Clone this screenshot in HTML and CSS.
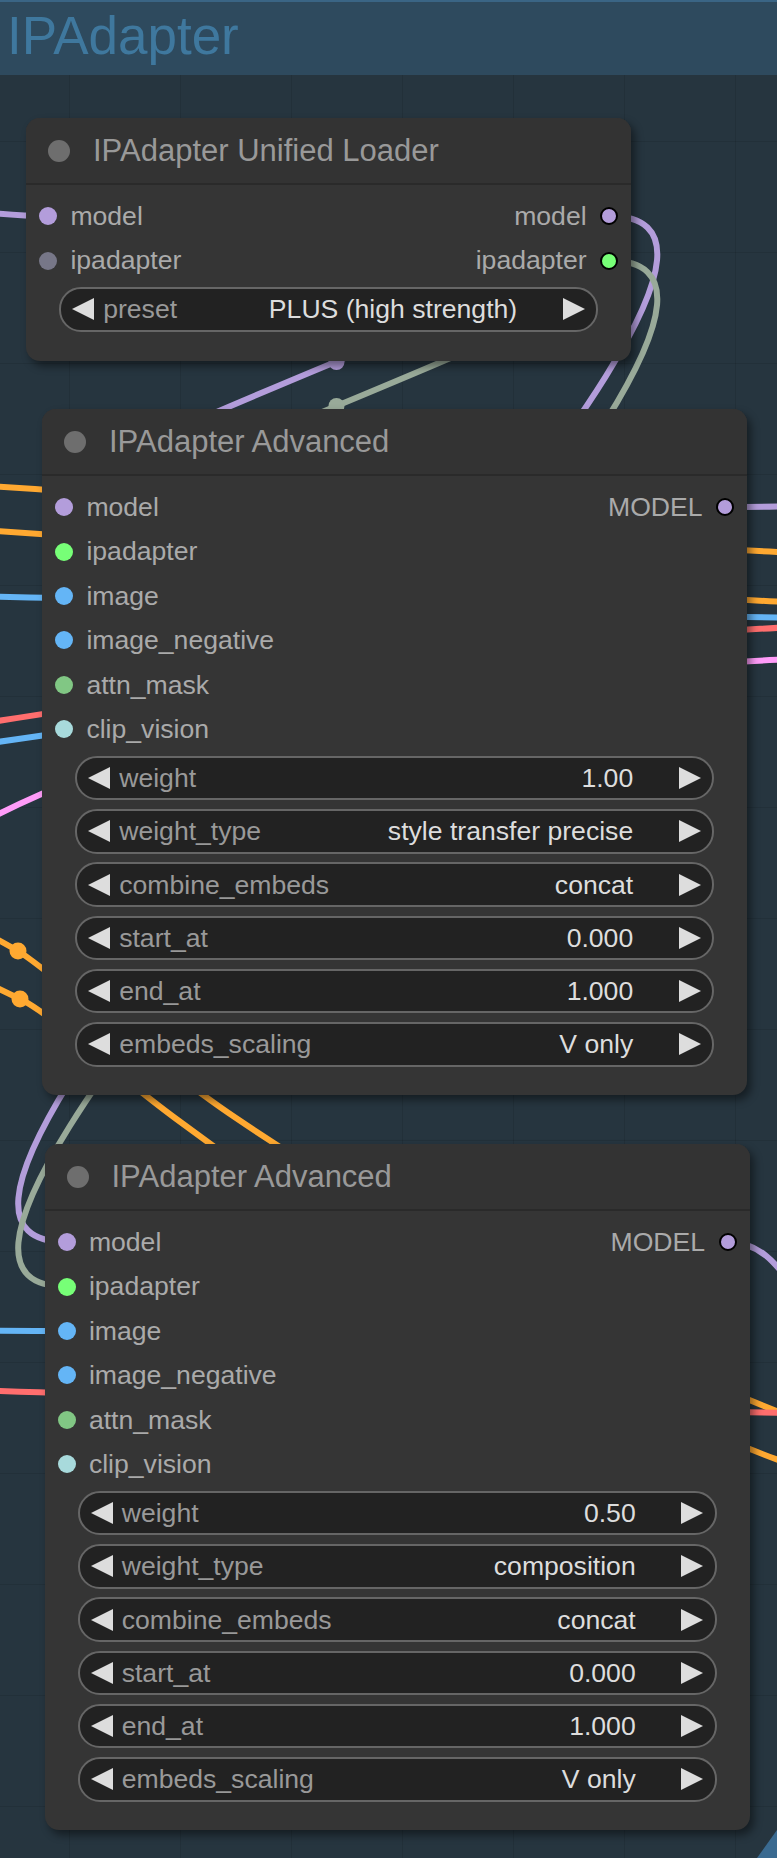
FILE: index.html
```html
<!DOCTYPE html>
<html lang="en">
<head>
<meta charset="utf-8">
<title>IPAdapter</title>
<link rel="stylesheet" href="styles.css">
</head>
<body>
<div class="canvas">
  <svg class="links" width="777" height="1858" viewBox="0 0 777 1858" xmlns="http://www.w3.org/2000/svg">
    <g fill="none" stroke-linecap="round">
      <!-- pass-through links -->
      <path class="wire" stroke="#ffa931" d="M-200,480 C200,482 500,557 1000,557"/>
      <path class="wire" stroke="#ffa931" d="M-200,524 C200,526 500,607 1000,607"/>
      <path class="wire" stroke="#ff6e6e" d="M-150,742 C100,712 500,622 1000,622"/>
      <path class="wire" stroke="#64b5f6" d="M-200,594 C200,596 500,619 1000,619"/>
      <path class="wire" stroke="#64b5f6" d="M-150,762 C60,736 250,700 400,690"/>
      <path class="wire" stroke="#ff9cf9" d="M-60,850 C20,790 300,655 1000,655"/>
      <path class="wire" stroke="#ffa931" d="M-80,897 C-30,925 -10,935 18,951 S150,1060 236,1118 S560,1330 800,1420"/>
      <path class="wire" stroke="#ffa931" d="M-80,945 C-30,975 -10,985 20,999 S100,1062 175,1118 S520,1368 800,1468"/>
      <path class="wire" stroke="#64b5f6" d="M-200,1329 C-100,1329 -50,1331 67,1331"/>
      <path class="wire" stroke="#ff6e6e" d="M-200,1385 C200,1395 500,1414 1000,1414"/>
      <path class="wire" stroke="#b39ddb" d="M-400,150 C-250,150 -100,216 48,216"/>
      <path class="wire" stroke="#b39ddb" d="M725,507 C850,507 900,500 1000,495"/>
      <path class="wire" stroke="#b39ddb" d="M727,1242 C760,1242 775,1262 800,1295"/>
      <!-- loader to advanced -->
      <path class="wire" stroke="#b39ddb" d="M609,216 C763.5,216 -90.5,507 64,507"/>
      <path class="wire" stroke="#99aa99" d="M609,260.6 C763.5,260.6 -90.5,551.6 64,551.6"/>
      <path class="wire" stroke="#b39ddb" d="M609,216 C899,216 -223.5,1242 66.5,1242"/>
      <path class="wire" stroke="#99aa99" d="M609,260.6 C899,260.6 -223.5,1286.6 66.5,1286.6"/>
    </g>
    <circle cx="336.5" cy="362" r="8" fill="#b39ddb"/>
    <circle cx="336.5" cy="406" r="8" fill="#99aa99"/>
    <circle cx="18" cy="951" r="8.5" fill="#ffa931"/>
    <circle cx="20" cy="999" r="8.5" fill="#ffa931"/>
  </svg>

  <div class="group-title">IPAdapter</div>

  <div class="node node-loader">
    <div class="node-title"><span class="title-dot"></span><span>IPAdapter Unified Loader</span></div>
    <div class="node-body">
      <div class="slot-row">
        <div class="slot-in"><span class="dot c-model"></span>model</div>
        <div class="slot-out">model<span class="dot out c-model"></span></div>
      </div>
      <div class="slot-row">
        <div class="slot-in"><span class="dot c-off"></span>ipadapter</div>
        <div class="slot-out">ipadapter<span class="dot out c-green"></span></div>
      </div>
      <div class="widgets">
        <div class="widget"><span class="arr-l"></span><span class="w-label">preset</span><span class="w-value">PLUS (high strength)</span><span class="arr-r"></span></div>
      </div>
    </div>
  </div>

  <div class="node node-adv node-adv1">
    <div class="node-title"><span class="title-dot"></span><span>IPAdapter Advanced</span></div>
    <div class="node-body">
      <div class="slot-row">
        <div class="slot-in"><span class="dot c-model"></span>model</div>
        <div class="slot-out">MODEL<span class="dot out c-model"></span></div>
      </div>
      <div class="slot-row"><div class="slot-in"><span class="dot c-green"></span>ipadapter</div></div>
      <div class="slot-row"><div class="slot-in"><span class="dot c-image"></span>image</div></div>
      <div class="slot-row"><div class="slot-in"><span class="dot c-image"></span>image_negative</div></div>
      <div class="slot-row"><div class="slot-in"><span class="dot c-mask"></span>attn_mask</div></div>
      <div class="slot-row"><div class="slot-in"><span class="dot c-clip"></span>clip_vision</div></div>
      <div class="widgets">
        <div class="widget"><span class="arr-l"></span><span class="w-label">weight</span><span class="w-value">1.00</span><span class="arr-r"></span></div>
        <div class="widget"><span class="arr-l"></span><span class="w-label">weight_type</span><span class="w-value">style transfer precise</span><span class="arr-r"></span></div>
        <div class="widget"><span class="arr-l"></span><span class="w-label">combine_embeds</span><span class="w-value">concat</span><span class="arr-r"></span></div>
        <div class="widget"><span class="arr-l"></span><span class="w-label">start_at</span><span class="w-value">0.000</span><span class="arr-r"></span></div>
        <div class="widget"><span class="arr-l"></span><span class="w-label">end_at</span><span class="w-value">1.000</span><span class="arr-r"></span></div>
        <div class="widget"><span class="arr-l"></span><span class="w-label">embeds_scaling</span><span class="w-value">V only</span><span class="arr-r"></span></div>
      </div>
    </div>
  </div>

  <div class="node node-adv node-adv2">
    <div class="node-title"><span class="title-dot"></span><span>IPAdapter Advanced</span></div>
    <div class="node-body">
      <div class="slot-row">
        <div class="slot-in"><span class="dot c-model"></span>model</div>
        <div class="slot-out">MODEL<span class="dot out c-model"></span></div>
      </div>
      <div class="slot-row"><div class="slot-in"><span class="dot c-green"></span>ipadapter</div></div>
      <div class="slot-row"><div class="slot-in"><span class="dot c-image"></span>image</div></div>
      <div class="slot-row"><div class="slot-in"><span class="dot c-image"></span>image_negative</div></div>
      <div class="slot-row"><div class="slot-in"><span class="dot c-mask"></span>attn_mask</div></div>
      <div class="slot-row"><div class="slot-in"><span class="dot c-clip"></span>clip_vision</div></div>
      <div class="widgets">
        <div class="widget"><span class="arr-l"></span><span class="w-label">weight</span><span class="w-value">0.50</span><span class="arr-r"></span></div>
        <div class="widget"><span class="arr-l"></span><span class="w-label">weight_type</span><span class="w-value">composition</span><span class="arr-r"></span></div>
        <div class="widget"><span class="arr-l"></span><span class="w-label">combine_embeds</span><span class="w-value">concat</span><span class="arr-r"></span></div>
        <div class="widget"><span class="arr-l"></span><span class="w-label">start_at</span><span class="w-value">0.000</span><span class="arr-r"></span></div>
        <div class="widget"><span class="arr-l"></span><span class="w-label">end_at</span><span class="w-value">1.000</span><span class="arr-r"></span></div>
        <div class="widget"><span class="arr-l"></span><span class="w-label">embeds_scaling</span><span class="w-value">V only</span><span class="arr-r"></span></div>
      </div>
    </div>
  </div>

  <div class="group-handle"></div>
</div>
</body>
</html>
```

FILE: styles.css
```css
html, body {
  margin: 0;
  padding: 0;
  background: #26343e;
}

.canvas {
  position: relative;
  width: 777px;
  height: 1858px;
  overflow: hidden;
  background-color: #26353f;
  background-image:
    linear-gradient(to right, rgba(0, 0, 0, 0.1) 1px, transparent 1px),
    linear-gradient(to bottom, rgba(0, 0, 0, 0.1) 1px, transparent 1px);
  background-size: 111px 111px;
  background-position: 69px 30px;
  font-family: "Liberation Sans", Arial, sans-serif;
}

.links {
  position: absolute;
  left: 0;
  top: 0;
}

.wire {
  stroke-width: 6;
}

.group-title {
  position: relative;
  height: 73px;
  border-top: 2px solid #3a6585;
  background: #2e4a5e;
  color: #3f789e;
  font-size: 53px;
  line-height: 67px;
  padding-left: 7px;
}

.group-handle {
  position: absolute;
  right: 0;
  bottom: 0;
  width: 0;
  height: 0;
  border-left: 20px solid transparent;
  border-bottom: 28px solid #3a6a90;
}

.node {
  position: absolute;
  background: #353535;
  border-radius: 14px;
  box-shadow: 4px 5px 8px rgba(0, 0, 0, 0.45);
  color: #aaa;
}

.node-loader {
  left: 26px;
  top: 118px;
  width: 605px;
}

.node-adv {
  width: 705px;
}

.node-adv1 {
  left: 42px;
  top: 409px;
}

.node-adv2 {
  left: 44.5px;
  top: 1144px;
}

.node-title {
  height: 67px;
  box-sizing: border-box;
  display: flex;
  align-items: center;
  background: #333333;
  border-radius: 14px 14px 0 0;
  border-bottom: 2px solid #2a2a2a;
  color: #999;
  font-size: 31px;
  line-height: 67px;
  white-space: nowrap;
}

.title-dot {
  width: 22px;
  height: 22px;
  border-radius: 50%;
  background: #6e6e6e;
  margin-left: 22px;
  margin-right: 23px;
  flex: none;
}

.node-body {
  padding: 9px 0 29px;
}

.node-adv .node-body {
  padding-bottom: 28px;
}

.slot-row {
  height: 44.4px;
  display: flex;
  justify-content: space-between;
  align-items: center;
  font-size: 26.6px;
  line-height: 44.4px;
  white-space: nowrap;
}

.slot-in {
  display: flex;
  align-items: center;
  gap: 13.4px;
  padding-left: 13px;
}

.slot-out {
  display: flex;
  align-items: center;
  gap: 13.4px;
  padding-right: 13px;
}

.dot {
  width: 18px;
  height: 18px;
  border-radius: 50%;
  box-sizing: border-box;
  flex: none;
}

.dot.out {
  border: 2px solid #000;
}

.c-model { background: #b39ddb; }
.c-green { background: #77ff77; }
.c-off { background: #777788; }
.c-image { background: #64b5f6; }
.c-mask { background: #81c784; }
.c-clip { background: #a8dadc; }

.widgets {
  margin-top: 4.5px;
  padding: 0 33px;
  display: flex;
  flex-direction: column;
  gap: 8.9px;
}

.widget {
  height: 44.4px;
  box-sizing: border-box;
  border: 2px solid #666;
  border-radius: 22px;
  background: #222;
  display: flex;
  align-items: center;
  padding: 0 11.3px;
  font-size: 26.6px;
  line-height: 40px;
  white-space: nowrap;
}

.arr-l {
  width: 0;
  height: 0;
  border-top: 11.5px solid transparent;
  border-bottom: 11.5px solid transparent;
  border-right: 22.2px solid #ddd;
  flex: none;
}

.arr-r {
  width: 0;
  height: 0;
  border-top: 11.5px solid transparent;
  border-bottom: 11.5px solid transparent;
  border-left: 22.2px solid #ddd;
  flex: none;
}

.w-label {
  margin-left: 8.9px;
  color: #999;
  flex: 1;
}

.w-value {
  color: #ddd;
  margin-right: 45.5px;
}
```
